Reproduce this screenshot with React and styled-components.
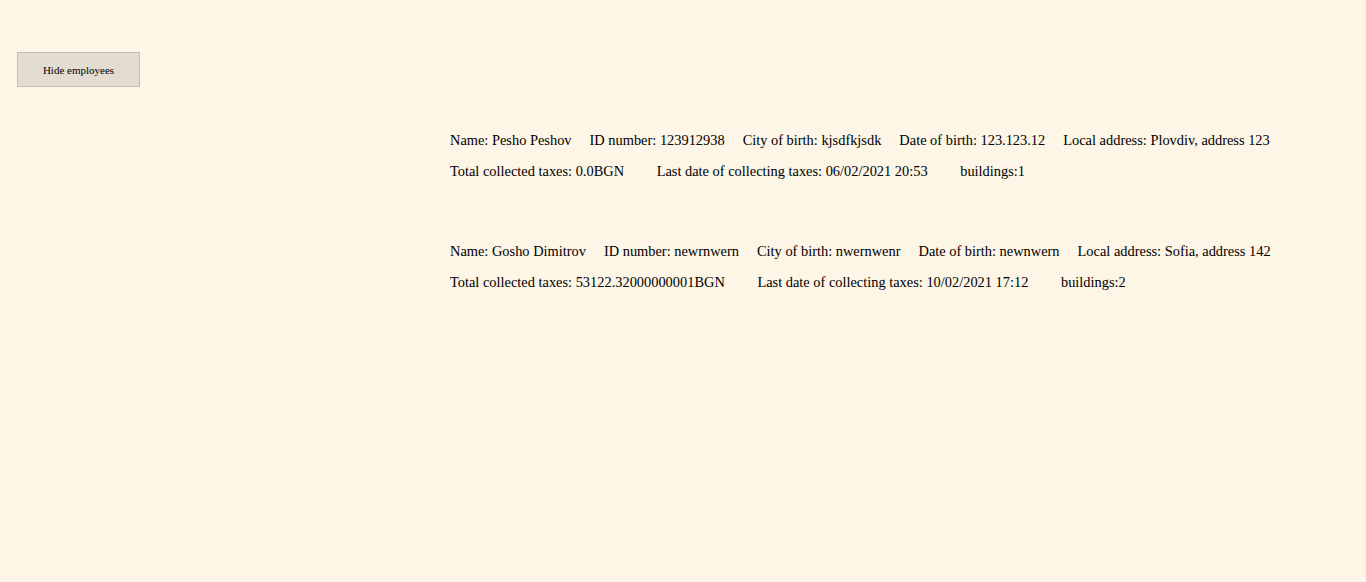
import React from 'react';
import styled, { createGlobalStyle } from 'styled-components';

const GlobalStyle = createGlobalStyle`
  html, body {
    margin: 0;
    background: #fdf5e6;
    font-family: "Liberation Serif", "Times New Roman", serif;
    color: #000;
  }
`;

const employees = [
  {
    name: 'Pesho Peshov',
    id: '123912938',
    city: 'kjsdfkjsdk',
    birth: '123.123.12',
    address: 'Plovdiv, address 123',
    taxes: '0.0BGN',
    lastDate: '06/02/2021 20:53',
    buildings: 1,
  },
  {
    name: 'Gosho Dimitrov',
    id: 'newrnwern',
    city: 'nwernwenr',
    birth: 'newnwern',
    address: 'Sofia, address 142',
    taxes: '53122.32000000001BGN',
    lastDate: '10/02/2021 17:12',
    buildings: 2,
  },
];

const Page = styled.div`
  min-height: 582px;
  padding: 52px 0 0 17px;
  box-sizing: border-box;
`;

const ToggleButton = styled.button`
  width: 123px;
  height: 35px;
  background: #e3ddd1;
  border: 1px solid #c3bcaf;
  font-family: "Liberation Serif", "Times New Roman", serif;
  font-size: 11px;
  color: #000;
  cursor: pointer;
`;

const List = styled.div`
  margin: 44px 0 0 433px;
  display: flex;
  flex-direction: column;
  gap: 62px;
`;

const Card = styled.div`
  display: flex;
  flex-direction: column;
  gap: 13px;
`;

const Row = styled.div`
  display: flex;
  gap: ${p => p.$gap}px;
  font-size: 14.4px;
  line-height: 18px;
  white-space: nowrap;
`;

const App = () => {
  return (
    <Page>
      <GlobalStyle />
      <ToggleButton>Hide employees</ToggleButton>
      <List>
        {employees.map(e => (
          <Card key={e.id}>
            <Row $gap={18}>
              <span>Name: {e.name}</span>
              <span>ID number: {e.id}</span>
              <span>City of birth: {e.city}</span>
              <span>Date of birth: {e.birth}</span>
              <span>Local address: {e.address}</span>
            </Row>
            <Row $gap={32.6}>
              <span>Total collected taxes: {e.taxes}</span>
              <span>Last date of collecting taxes: {e.lastDate}</span>
              <span>buildings:{e.buildings}</span>
            </Row>
          </Card>
        ))}
      </List>
    </Page>
  );
};

export default App;
